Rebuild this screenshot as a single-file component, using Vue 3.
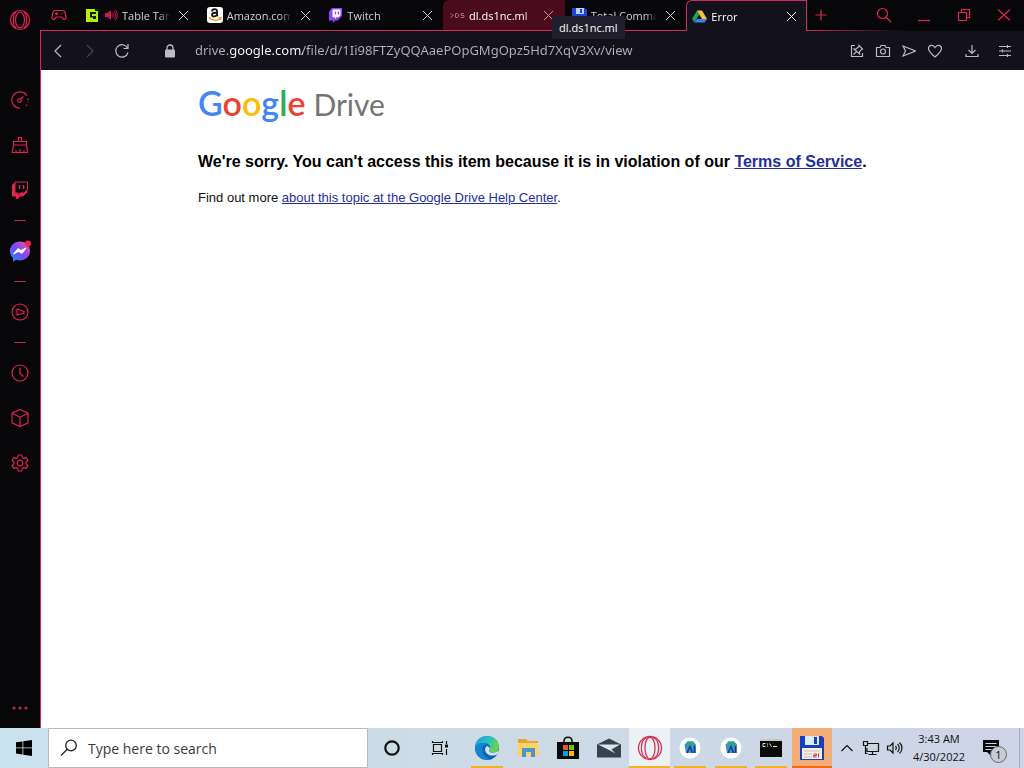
<template>
    <div class="desktop">
        <div class="browser">
            <nav class="sidebar" aria-label="Sidebar">
                <button class="side-btn logo" aria-label="Opera menu">
                    <svg width="22" height="22" viewBox="0 0 22 22" class="line">
                        <circle cx="11" cy="11" r="9.5" />
                        <ellipse cx="11" cy="11" rx="4.5" ry="8" />
                        <path d="M7 3C3.500 6 3.500 16 7 19M15 3C18.500 6 18.500 16 15 19" />
                    </svg>
                </button>
                <button class="side-btn" aria-label="GX Control">
                    <svg width="20" height="20" viewBox="0 0 20 20" class="line">
                        <path d="M10 18.200A8.200 8.200 0 1 1 17 5.700" />
                        <path d="M18 8.500v4M17 14.500l-1 1.500" stroke-dasharray="2 1.500" />
                        <circle cx="9.500" cy="10.500" r="1.800" />
                        <path d="M11 9l2.500-2.500" />
                    </svg>
                </button>
                <button class="side-btn" aria-label="GX Cleaner">
                    <svg width="20" height="20" viewBox="0 0 20 20" class="line">
                        <path d="M8.500 6V2.500h3V6M3.500 10V6.500h13V10zM3.500 10L2.200 17.500h15.300L16.500 10M6 15v2.500M10 14v3.500M14 15v2.500" />
                    </svg>
                </button>
                <button class="side-btn" aria-label="Twitch">
                    <svg width="20" height="20" viewBox="0 0 20 20">
                        <path d="M2 5L5 2v11h3v2.500L10.500 13H14l3.500-3.500V12L13 16.500h-3L7.500 19H6v-2.500H2z" fill="#e0234f" />
                        <path d="M5 2h12.500v7.500L14 13h-3.500L8 15.500V13H5z" fill="none" stroke="#e0234f" />
                        <path d="M9.500 5v4M13.500 5v4" stroke="#e0234f" stroke-width="1.500" />
                    </svg>
                </button>
                <hr>
                <button class="side-btn" aria-label="Messenger">
                    <svg width="22" height="22" viewBox="0 0 22 22">
                        <defs>
                            <linearGradient id="msg" x1="0" y1="1" x2="1" y2="0">
                                <stop offset="0" stop-color="#1292ff" />
                                <stop offset="0.5" stop-color="#7a48f5" />
                                <stop offset="1" stop-color="#f85a90" />
                            </linearGradient>
                        </defs>
                        <path d="M11 1.500C5.200 1.500 1 5.700 1 11c0 3 1.200 5.400 3 7v3.500l3.200-1.700c1.200.4 2.500.6 3.800.6 5.800 0 10-4.200 10-9.500S16.800 1.500 11 1.500z" fill="url(#msg)" />
                        <path d="M4.500 14l4.500-5.500 3 2 5-2.500-4 5.500-3.500-2z" fill="#fff" stroke="#fff" stroke-linejoin="round" />
                        <circle cx="19" cy="3.500" r="3" fill="#fa1e4e" />
                    </svg>
                </button>
                <hr>
                <button class="side-btn" aria-label="Player">
                    <svg width="20" height="20" viewBox="0 0 20 20" class="line">
                        <circle cx="10" cy="10" r="8" />
                        <path d="M7 7l7 2.500v1.500l-7 2z" stroke-linejoin="round" />
                    </svg>
                </button>
                <hr>
                <button class="side-btn" aria-label="History">
                    <svg width="20" height="20" viewBox="0 0 20 20" class="line">
                        <circle cx="10" cy="10" r="8" />
                        <path d="M10 5v5.500l3.500 3" />
                    </svg>
                </button>
                <button class="side-btn" aria-label="Extensions">
                    <svg width="20" height="20" viewBox="0 0 20 20" class="line">
                        <path d="M10 1.500l8 3.700v9.600l-8 3.700-8-3.700V5.200zM2 5.200l8 4 8-4M10 9.200v9.300" />
                    </svg>
                </button>
                <button class="side-btn" aria-label="Settings">
                    <svg width="20" height="20" viewBox="0 0 20 20" class="line">
                        <circle cx="10" cy="10" r="2.800" />
                        <path stroke-linejoin="round" d="M8.300 2h3.400l.5 2.500 1.600.9 2.400-.8 1.700 2.900-1.900 1.700v1.600l1.900 1.700-1.700 2.900-2.400-.8-1.600.9-.5 2.500H8.300l-.5-2.500-1.600-.9-2.400.8-1.700-2.900L4 10.800V9.200L2.100 7.500l1.700-2.900 2.400.8 1.600-.9z" />
                    </svg>
                </button>
                <button class="side-btn more" aria-label="Sidebar setup">
                    <svg width="20" height="6" viewBox="0 0 20 6" fill="#c22450">
                        <circle cx="4" cy="3" r="1.600" />
                        <circle cx="10" cy="3" r="1.600" />
                        <circle cx="16" cy="3" r="1.600" />
                    </svg>
                </button>
            </nav>

            <div class="main">
                <header class="tabbar">
                    <button class="gx" aria-label="GX Corner">
                        <svg width="16" height="12" viewBox="0 0 16 12" class="line">
                            <path d="M4 1.500h8c1.500 0 2 1 2.300 3l.7 4c.2 1.500-1.500 2.500-2.500 1.500L10.500 8h-5l-2 2C2.500 11 .8 10 1 8.500l.7-4c.3-2 .8-3 2.300-3z" />
                            <path d="M4 4.700h3M5.500 3.300v3M10 5.500h1M11.500 4h1" />
                        </svg>
                    </button>
                    <div class="tabs">
                        <div v-for="tab in tabs" :key="tab.title" class="tab" :class="tab.state">
                            <svg v-if="tab.icon == 'table'" class="fav" width="15" height="15" viewBox="0 0 15 15">
                                <path d="M1 1h9v2h3v11H1z" fill="#b6f000" />
                                <path d="M11 1h2v1h-2zM5 4h6v2H7v2h4v3H8V9.500H5z" fill="#15200a" />
                            </svg>
                            <svg v-else-if="tab.icon == 'amazon'" class="fav" width="16" height="16" viewBox="0 0 16 16">
                                <rect width="16" height="16" rx="3" fill="#fff" />
                                <path d="M5 4.500C5.300 1.500 10 1.500 10 4v3.500c0 .7.300 1.200.8 1.700M10 5.500c-3 0-5 .4-5 2.400 0 2.200 3.800 2.100 5-.3" fill="none" stroke="#111" stroke-width="1.800" />
                                <path d="M2 10.500c3.500 3.500 8.500 3.500 11.500.8M11.500 10.500l2.500.2-.6 2.300" fill="none" stroke="#f79a1c" stroke-width="1.300" />
                            </svg>
                            <svg v-else-if="tab.icon == 'twitch'" class="fav" width="15" height="15" viewBox="0 0 15 15">
                                <path d="M1 3.500L4 0h10v8l-4.500 4.500H7.500L5 15v-2.500H1z" fill="#8d45f7" />
                                <path d="M4.500 1.500h8v5.800l-2 2h-2L7 11V9.300H4.500z" fill="#fff" />
                                <path d="M7.500 3.500v3M10.500 3.500v3" stroke="#8d45f7" stroke-width="1.300" />
                            </svg>
                            <svg v-else-if="tab.icon == 'ds'" class="fav" width="15" height="15" viewBox="0 0 15 15" fill="none" stroke="#a3697b">
                                <path d="M.5 5.500l3 2-3 2M5.500 5.500v4h1.500l1.500-1v-2l-1.500-1zM14 5.500h-3v2h3v2h-3.500" />
                            </svg>
                            <svg v-else-if="tab.icon == 'disk'" class="fav" width="15" height="15" viewBox="0 0 15 15">
                                <path d="M0 0h13l2 2v13H0z" fill="#1d43d8" />
                                <path d="M4 0h8v6H4z" fill="#b9d4f5" />
                                <path d="M8 1h2v4H8z" fill="#1d43d8" />
                                <path d="M2 8h11v7H2z" fill="#eee" />
                            </svg>
                            <svg v-else class="fav" width="15" height="15" viewBox="0 0 15 15">
                                <path d="M5 1.500L0 10l2.500 3.500L7.500 5z" fill="#1aa45c" />
                                <path d="M5 1.500h5L15 10h-5z" fill="#fbc02d" />
                                <path d="M5 10h10l-2.500 3.500h-10z" fill="#4080f0" />
                            </svg>
                            <svg v-if="tab.sound" class="sound" width="14" height="14" viewBox="0 0 14 14">
                                <path d="M1 5h2.500L7 2v10L3.500 9H1z" fill="#d01c48" />
                                <path d="M8.500 5c1 1 1 3 0 4M9.500 3c2.500 2 2.500 6 0 8M11 1.500c3 3 3 8 0 11" fill="none" stroke="#d01c48" />
                            </svg>
                            <a href="#" class="title">{{ tab.title }}</a>
                            <button class="close" :aria-label="'Close ' + tab.title">
                                <svg width="11" height="11" viewBox="0 0 11 11" fill="none" stroke="currentColor">
                                    <path d="M1 1l9 9M10 1l-9 9" />
                                </svg>
                            </button>
                            <span v-if="tab.state == 'hover'" class="tooltip" role="tooltip">{{ tab.title }}</span>
                        </div>
                    </div>
                    <button class="new-tab" aria-label="New tab">
                        <svg width="12" height="12" viewBox="0 0 12 12" class="line">
                            <path d="M6 .5v11M.5 6h11" />
                        </svg>
                    </button>
                    <div class="window-btns">
                        <button aria-label="Search tabs">
                            <svg width="16" height="16" viewBox="0 0 16 16" class="line">
                                <circle cx="6.500" cy="6.500" r="5" />
                                <path d="M10 10l5 5" />
                            </svg>
                        </button>
                        <button aria-label="Minimize">
                            <svg width="14" height="14" viewBox="0 0 14 14" class="line">
                                <path d="M1 12.500h12" />
                            </svg>
                        </button>
                        <button aria-label="Restore">
                            <svg width="14" height="14" viewBox="0 0 14 14" class="line">
                                <path d="M1.500 4.500h8v8h-8zM4.500 4.500v-3h8v8h-3" />
                            </svg>
                        </button>
                        <button aria-label="Close">
                            <svg width="14" height="14" viewBox="0 0 14 14" class="line">
                                <path d="M1 1.500l12 11M13 1.500l-12 11" />
                            </svg>
                        </button>
                    </div>
                </header>

                <div class="toolbar">
                    <button class="nav-btn" aria-label="Back">
                        <svg width="14" height="14" viewBox="0 0 14 14" class="tool"><path d="M10 1L4 7l6 6" /></svg>
                    </button>
                    <button class="nav-btn" aria-label="Forward" disabled>
                        <svg width="14" height="14" viewBox="0 0 14 14" class="tool"><path d="M4 1l6 6-6 6" /></svg>
                    </button>
                    <button class="nav-btn" aria-label="Reload">
                        <svg width="16" height="16" viewBox="0 0 16 16" class="tool">
                            <path d="M14 9.500A6.200 6.200 0 1 1 13.500 5M14 1v4.500H9.500" />
                        </svg>
                    </button>
                    <button class="nav-btn lock" aria-label="Site information">
                        <svg width="12" height="14" viewBox="0 0 12 14">
                            <path d="M3 6V4c0-4 6-4 6 0v2" fill="none" stroke="#bdb9cb" stroke-width="1.300" />
                            <rect x="1" y="5.500" width="10" height="8" rx="1" fill="#bdb9cb" />
                        </svg>
                    </button>
                    <input v-model="url" class="url" type="text" aria-label="Address" spellcheck="false">
                    <div class="actions">
                        <button aria-label="Easy Setup">
                            <svg width="14" height="14" viewBox="0 0 14 14" class="tool">
                                <path d="M5 1.500H1.500v11h11V9M9 1.500l3.500 3.500-1 .5-2 2.500v2l-5.500-5h2L9 2.500zM6.500 7.500L3.500 10.500" />
                            </svg>
                        </button>
                        <button aria-label="Snapshot">
                            <svg width="16" height="14" viewBox="0 0 16 14" class="tool">
                                <path d="M1.500 3.500H5l1-2h4l1 2h3.500v9h-13z" />
                                <circle cx="8" cy="7.500" r="2.500" />
                            </svg>
                        </button>
                        <button aria-label="Send to My Flow">
                            <svg width="14" height="14" viewBox="0 0 14 14" class="tool">
                                <path d="M1 2l12.500 5L1 12l2.500-5z" />
                            </svg>
                        </button>
                        <button aria-label="Bookmark">
                            <svg width="16" height="14" viewBox="0 0 16 14" class="tool">
                                <path d="M8 13C4.500 10 1.500 7.500 1.500 4.500 1.500 1 6 0 8 3.500 10 0 14.500 1 14.500 4.500 14.500 7.500 11.500 10 8 13z" />
                            </svg>
                        </button>
                        <button class="wide" aria-label="Downloads">
                            <svg width="14" height="14" viewBox="0 0 14 14" class="tool">
                                <path d="M7 1v8M3.500 6L7 9.500 10.500 6M1 10v2.500h12V10" />
                            </svg>
                        </button>
                        <button aria-label="Easy settings">
                            <svg width="14" height="14" viewBox="0 0 14 14" class="tool">
                                <path d="M1 2.500h12M1 7h12M1 11.500h12M9.500 1v3M4.500 5.500v3M9.500 10v3" />
                            </svg>
                        </button>
                    </div>
                </div>

                <main class="page">
                    <div class="brand">
                        <span class="google"><span class="b">G</span><span class="r">o</span><span class="y">o</span><span class="b">g</span><span class="g">l</span><span class="r">e</span></span>
                        <span class="drive">Drive</span>
                    </div>
                    <h1>We're sorry. You can't access this item because it is in violation of our <a href="#">Terms of Service</a>.</h1>
                    <p>Find out more <a href="#">about this topic at the Google Drive Help Center</a>.</p>
                </main>
            </div>
        </div>

        <footer class="taskbar">
            <button class="start" aria-label="Start">
                <svg width="16" height="16" viewBox="0 0 16 16">
                    <path d="M0 2.300l6.500-.9v6.100H0zM7.300 1.300L16 0v7.500H7.300zM0 8.300h6.500v6.200L0 13.600zM7.300 8.300H16V16l-8.700-1.300z" />
                </svg>
            </button>
            <label class="search">
                <svg width="18" height="18" viewBox="0 0 18 18" fill="none" stroke="#222" stroke-width="1.300">
                    <circle cx="11" cy="6.500" r="5.300" />
                    <path d="M7.200 10.300L1 16.500" />
                </svg>
                <input type="text" placeholder="Type here to search" aria-label="Type here to search">
            </label>
            <button class="sys" aria-label="Cortana">
                <svg width="18" height="18" viewBox="0 0 18 18" fill="none" stroke="#111" stroke-width="2.200">
                    <circle cx="9" cy="9" r="6.700" />
                </svg>
            </button>
            <button class="sys" aria-label="Task View">
                <svg width="18" height="16" viewBox="0 0 18 16" fill="none" stroke="#111" stroke-width="1.200">
                    <path d="M2.500 4.500h8v7h-8zM1.500 1v1.500h10V1M1.500 15v-1.500h10V15M15.500 1v3M15.500 9v6" />
                    <path d="M14 4.500h3v3h-3z" fill="#111" stroke="none" />
                </svg>
            </button>
            <div class="apps">
                <button v-for="app in apps" :key="app.name" :aria-label="app.name" class="app" :class="app.state">
                    <svg v-if="app.icon == 'edge'" width="24" height="24" viewBox="0 0 24 24">
                        <defs>
                            <linearGradient id="edge-top" x1="0" y1="0" x2="1" y2="0.4">
                                <stop offset="0" stop-color="#159fd9" />
                                <stop offset="0.6" stop-color="#2cc3c3" />
                                <stop offset="1" stop-color="#68d649" />
                            </linearGradient>
                        </defs>
                        <circle cx="12" cy="12" r="12" fill="#0d62b4" />
                        <path d="M0 12C0 5 5 0 12 0s12 5 12 10.500c0 4-3 6-6 6-3 0-4.500-1-3.500-2.500C16.500 10.500 13.500 7 9 7 4 7 .5 10 0 12z" fill="url(#edge-top)" />
                        <path d="M0 12c.5-3 4-5.200 8.500-5 2 .1 3 .6 4 1.300C8.500 8.500 7 12 7.500 15c.7 4 4 7.500 8.500 8.200C7 26 0 19 0 12z" fill="#1782cf" />
                        <path d="M12 10c-2.500 1.500-2.700 5.500.5 8 3 2.300 7 2 10 0l1.500-4c-2 2-4 2.700-6 2.700-3 0-4.500-1.200-3.500-2.700.8-1.500 0-3.500-2.500-4z" fill="#d4e3ed" />
                    </svg>
                    <svg v-else-if="app.icon == 'explorer'" width="24" height="22" viewBox="0 0 24 22">
                        <path d="M2 2h8l2 2h10v4H2z" fill="#e4a72c" />
                        <path d="M2 6h20l1 13H1z" fill="#fcd26b" />
                        <path d="M6 11h13v9h-4v-5h-5v5H6z" fill="#4795cf" />
                    </svg>
                    <svg v-else-if="app.icon == 'store'" width="24" height="24" viewBox="0 0 24 24">
                        <path d="M8 7V5c0-5 8-5 8 0v2" fill="none" stroke="#111" stroke-width="1.500" />
                        <path d="M1 6h22v17H1z" fill="#0a0a0a" />
                        <path d="M7 9h5v5H7z" fill="#f25022" />
                        <path d="M13 9h5v5h-5z" fill="#7fba00" />
                        <path d="M7 15h5v5H7z" fill="#00a4ef" />
                        <path d="M13 15h5v5h-5z" fill="#ffb900" />
                    </svg>
                    <svg v-else-if="app.icon == 'mail'" width="24" height="20" viewBox="0 0 24 20">
                        <path d="M0 6.500L12 .5l12 6v13H0z" fill="#37424c" />
                        <path d="M1 6.500h22l-8.500 5 4 4-8.500-4.500z" fill="#dbe4ec" />
                    </svg>
                    <svg v-else-if="app.icon == 'opera'" width="26" height="26" viewBox="0 0 26 26" fill="none" stroke="#d8304f" stroke-width="1.300">
                        <circle cx="13" cy="13" r="11.500" />
                        <ellipse cx="13" cy="13" rx="5" ry="11" />
                        <path d="M10 2.500C2.500 5 2.500 21 10 23.500M16 2.500C23.500 5 23.500 21 16 23.500" />
                    </svg>
                    <svg v-else-if="app.icon == 'studio'" width="22" height="22" viewBox="0 0 22 22">
                        <circle cx="11" cy="11" r="10.500" fill="#fff" />
                        <path d="M5.500 8l3-3.500h5.500l3 3.500v8H7z" fill="#3b8fdc" />
                        <path d="M5.500 8L8.500 4.500H14L16.500 7v1z" fill="#2fa97c" />
                        <path d="M8 16l3-6.500 2.500 6.500M15.500 9v7" fill="none" stroke="#173d70" stroke-width="1.400" />
                    </svg>
                    <svg v-else-if="app.icon == 'cmd'" width="22" height="20" viewBox="0 0 22 20">
                        <path d="M0 1h22v18H0z" fill="#0b0b0b" />
                        <path d="M0 1h22v2H0z" fill="#c9c9c9" />
                        <path d="M5.500 5.500H3v3h2.500M7.500 5.500v1M7.500 7.500v1M9.500 5.500l2 3M13 8.500h4" fill="none" stroke="#ddd" />
                    </svg>
                    <svg v-else width="24" height="24" viewBox="0 0 24 24">
                        <path d="M0 0h22l2 2v22H0z" fill="#163fbd" />
                        <path d="M5 0h14v9H5z" fill="#dcecf7" />
                        <path d="M14 1h3v7h-3z" fill="#163fbd" />
                        <path d="M2 12h20v11H2z" fill="#f5efe8" />
                        <path d="M4 15h16M4 18h8M4 21h8" stroke="#cdb9ae" />
                        <path d="M13.500 18h3v1.500h-3V21h3M18.500 17.500v4" fill="none" stroke="#ce3a30" />
                    </svg>
                </button>
            </div>
            <div class="tray">
                <button aria-label="Show hidden icons">
                    <svg width="14" height="14" viewBox="0 0 14 14" class="ink"><path d="M1.500 10L7 4.500l5.500 5.500" /></svg>
                </button>
                <button aria-label="Network">
                    <svg width="18" height="16" viewBox="0 0 18 16" class="ink">
                        <path d="M5 3.500h11.500v8H5V8M10.500 11.500V14M6.500 14.500h8M1.500 1.500h4v4h-4zM3.500 5.500v8h2" />
                    </svg>
                </button>
                <button aria-label="Volume">
                    <svg width="18" height="16" viewBox="0 0 18 16" class="ink">
                        <path d="M1.500 6v4H4l3 3V3L4 6zM9.500 6c1 1 1 3 0 4M11.500 4c2.300 2 2.300 6 0 8M13.500 2.500c3.300 3 3.300 8 0 11" />
                    </svg>
                </button>
                <button class="clock">
                    <span>3:43 AM</span>
                    <span>4/30/2022</span>
                </button>
                <button class="notice" aria-label="Notifications">
                    <svg width="18" height="18" viewBox="0 0 18 18">
                        <path d="M1 1h16v12H9v4l-4-4H1z" fill="#0a0a0a" />
                        <path d="M3.500 4.500h11M3.500 7.500h11M3.500 10.500h6" stroke="#cdd6e6" />
                    </svg>
                    <span class="badge">1</span>
                </button>
                <button class="peek" aria-label="Show desktop"></button>
            </div>
        </footer>
    </div>
</template>

<script setup>
import { ref } from 'vue';

const url = ref('drive.google.com/file/d/1Ii98FTZyQQAaePOpGMgOpz5Hd7XqV3Xv/view');

const tabs = [
    { title: 'Table Tanks', icon: 'table', sound: true },
    { title: 'Amazon.com', icon: 'amazon' },
    { title: 'Twitch', icon: 'twitch' },
    { title: 'dl.ds1nc.ml', icon: 'ds', state: 'hover' },
    { title: 'Total Commander', icon: 'disk' },
    { title: 'Error', icon: 'drive', state: 'active' },
];

const apps = [
    { name: 'Microsoft Edge', icon: 'edge', state: 'running' },
    { name: 'File Explorer', icon: 'explorer' },
    { name: 'Microsoft Store', icon: 'store' },
    { name: 'Mail', icon: 'mail' },
    { name: 'Opera GX', icon: 'opera', state: 'focused' },
    { name: 'Android Studio', icon: 'studio', state: 'running' },
    { name: 'Android Studio 2', icon: 'studio', state: 'running' },
    { name: 'Command Prompt', icon: 'cmd', state: 'running' },
    { name: 'Total Commander', icon: 'disk', state: 'alert' },
];
</script>

<style>
body {
    margin: 0;
}
</style>

<style scoped>
.desktop {
    display: flex;
    flex-direction: column;
    min-height: 100vh;
    font-family: "Open Sans", "Noto Sans", sans-serif;
    font-size: 11px;
}

button {
    display: flex;
    align-items: center;
    justify-content: center;
    padding: 0;
    border: none;
    background: none;
    font: inherit;
    color: inherit;
}

svg {
    flex: none;
}

.line {
    fill: none;
    stroke: #e0234f;
    stroke-width: 1.2;
}

.tool {
    fill: none;
    stroke: #bdb9cb;
    stroke-width: 1.2;
}

.ink {
    fill: none;
    stroke: #111;
    stroke-width: 1.2;
}

.browser {
    flex: 1;
    display: flex;
    background: #07070a;
}

/* sidebar */
.sidebar {
    flex: none;
    width: 40px;
    display: flex;
    flex-direction: column;
}

.side-btn {
    height: 45px;
}

.logo {
    height: 40px;
    margin-bottom: 37px;
}

.more {
    height: 40px;
    margin-top: auto;
}

.sidebar hr {
    width: 12px;
    height: 1px;
    margin: 8px auto 7px;
    border: none;
    background: #c22450;
}

.main {
    flex: 1;
    min-width: 0;
    display: flex;
    flex-direction: column;
}

/* tabs */
.tabbar {
    display: flex;
    align-items: flex-start;
    height: 31px;
    background: linear-gradient(to right, #d32a58 78%, transparent 88%) left bottom / 100% 1px no-repeat;
}

.gx {
    width: 38px;
    height: 30px;
}

.tabs {
    flex: 0 1 729px;
    min-width: 0;
    display: flex;
}

.tab {
    position: relative;
    flex: 1;
    min-width: 0;
    height: 30px;
    box-sizing: border-box;
    display: flex;
    align-items: center;
    padding: 0 9px 0 7px;
    color: #d2d0d8;
}

.fav {
    margin-right: 4px;
}

.sound {
    margin-right: 4px;
}

.title {
    flex: 1;
    min-width: 0;
    overflow: hidden;
    white-space: nowrap;
    color: inherit;
    text-decoration: none;
    mask-image: linear-gradient(to left, transparent, #000 12px);
}

.close {
    width: 14px;
    height: 14px;
    margin-left: 6px;
}

.tab.hover {
    background: #4a0b1c;
    border-top-left-radius: 6px;
    color: #fff;
}

.tab.hover .close {
    color: #d98a9c;
}

.tab.active {
    height: 31px;
    padding: 0 8px 0 5px;
    border: 1px solid #d32a58;
    border-bottom: none;
    border-radius: 6px 0 0 0;
    background: #13111b;
    color: #fff;
}

.tooltip {
    position: absolute;
    z-index: 2;
    left: 109px;
    top: 16px;
    padding: 0 7px;
    line-height: 23px;
    border-radius: 2px;
    background: #211e2e;
    color: #fff;
    white-space: nowrap;
}

.new-tab {
    width: 28px;
    height: 30px;
}

.window-btns {
    display: flex;
    margin-left: auto;
}

.window-btns button {
    width: 40px;
    height: 30px;
}

/* address bar */
.toolbar {
    display: flex;
    align-items: center;
    height: 39px;
    padding: 0 6px 0 1px;
    border-left: 1px solid #d32a58;
    background: #13111b;
}

.nav-btn {
    width: 32px;
    height: 32px;
}

.nav-btn:disabled {
    opacity: 0.3;
}

.lock {
    margin-left: 16px;
}

.url {
    flex: 1;
    min-width: 0;
    height: 20px;
    margin-left: 9px;
    padding: 0 0 2px;
    border: none;
    outline: none;
    font: 13px "Noto Sans", "Open Sans", sans-serif;
    color: transparent;
    background: linear-gradient(to right, #b3b0c0 34px, #fff 34px, #fff 108px, #b3b0c0 108px);
    background-clip: text;
}

.actions {
    display: flex;
}

.actions button {
    width: 26px;
    height: 32px;
}

.actions .wide {
    width: 40px;
    margin-left: 4px;
}

/* page */
.page {
    flex: 1;
    padding: 12px 24px 24px 157px;
    border-left: 1px solid #d32a58;
    background: #fff;
    font-family: "Liberation Sans", Arial, sans-serif;
}

.brand {
    display: flex;
    align-items: baseline;
    gap: 8px;
    height: 44px;
    line-height: 42px;
    font-family: Lato, sans-serif;
}

.google {
    font-size: 34px;
    font-weight: 600;
}

.drive {
    font-size: 30px;
    color: #757575;
}

.b {
    color: #4285f4;
}

.r {
    color: #ea4335;
}

.y {
    color: #fbbc05;
}

.g {
    color: #34a853;
}

.page h1 {
    margin: 27px 0 19px;
    font-size: 16px;
    line-height: 18px;
    color: #000;
}

.page p {
    margin: 0;
    font-size: 13px;
    line-height: 16px;
    color: #111;
}

.page a {
    color: #1f2f9c;
}

/* taskbar */
.taskbar {
    display: flex;
    height: 40px;
    background: linear-gradient(to right, #c9e3ee, #cddbe6 45%, #cdd4e6);
    color: #111;
}

.start {
    width: 48px;
}

.search {
    flex: 0 1 320px;
    min-width: 0;
    box-sizing: border-box;
    display: flex;
    align-items: center;
    gap: 10px;
    padding: 0 11px;
    border: 1px solid #b4bcc2;
    background: #fff;
}

.search input {
    flex: 1;
    min-width: 0;
    padding: 0;
    border: none;
    outline: none;
    background: none;
    font: inherit;
    font-size: 14px;
}

.search input::placeholder {
    color: #3c3c3c;
    opacity: 1;
}

.sys {
    width: 48px;
}

.apps {
    flex: 0 1 365px;
    display: flex;
    margin-left: 3px;
}

.app {
    flex: 1;
    border: 0 solid transparent;
    border-width: 2px 0;
}

.running {
    background: linear-gradient(#f0b323, #f0b323) center bottom / 32px 2px no-repeat border-box;
}

.focused {
    border-bottom-color: #f0b323;
    background: #ecf1f6;
}

.alert {
    border-bottom-color: #f26b13;
    background: #f4ad79;
}

.tray {
    display: flex;
    margin-left: auto;
}

.tray button {
    width: 24px;
}

.tray .clock {
    width: 64px;
    flex-direction: column;
    line-height: 18px;
}

.tray .notice {
    position: relative;
    width: 48px;
    padding-right: 8px;
}

.badge {
    position: absolute;
    left: 19px;
    top: 18px;
    width: 15px;
    height: 15px;
    line-height: 15px;
    border: 1px solid #666;
    border-radius: 50%;
    background: #c6ccd6;
}

.tray .peek {
    width: 5px;
    border-left: 1px solid #a4acba;
}
</style>
